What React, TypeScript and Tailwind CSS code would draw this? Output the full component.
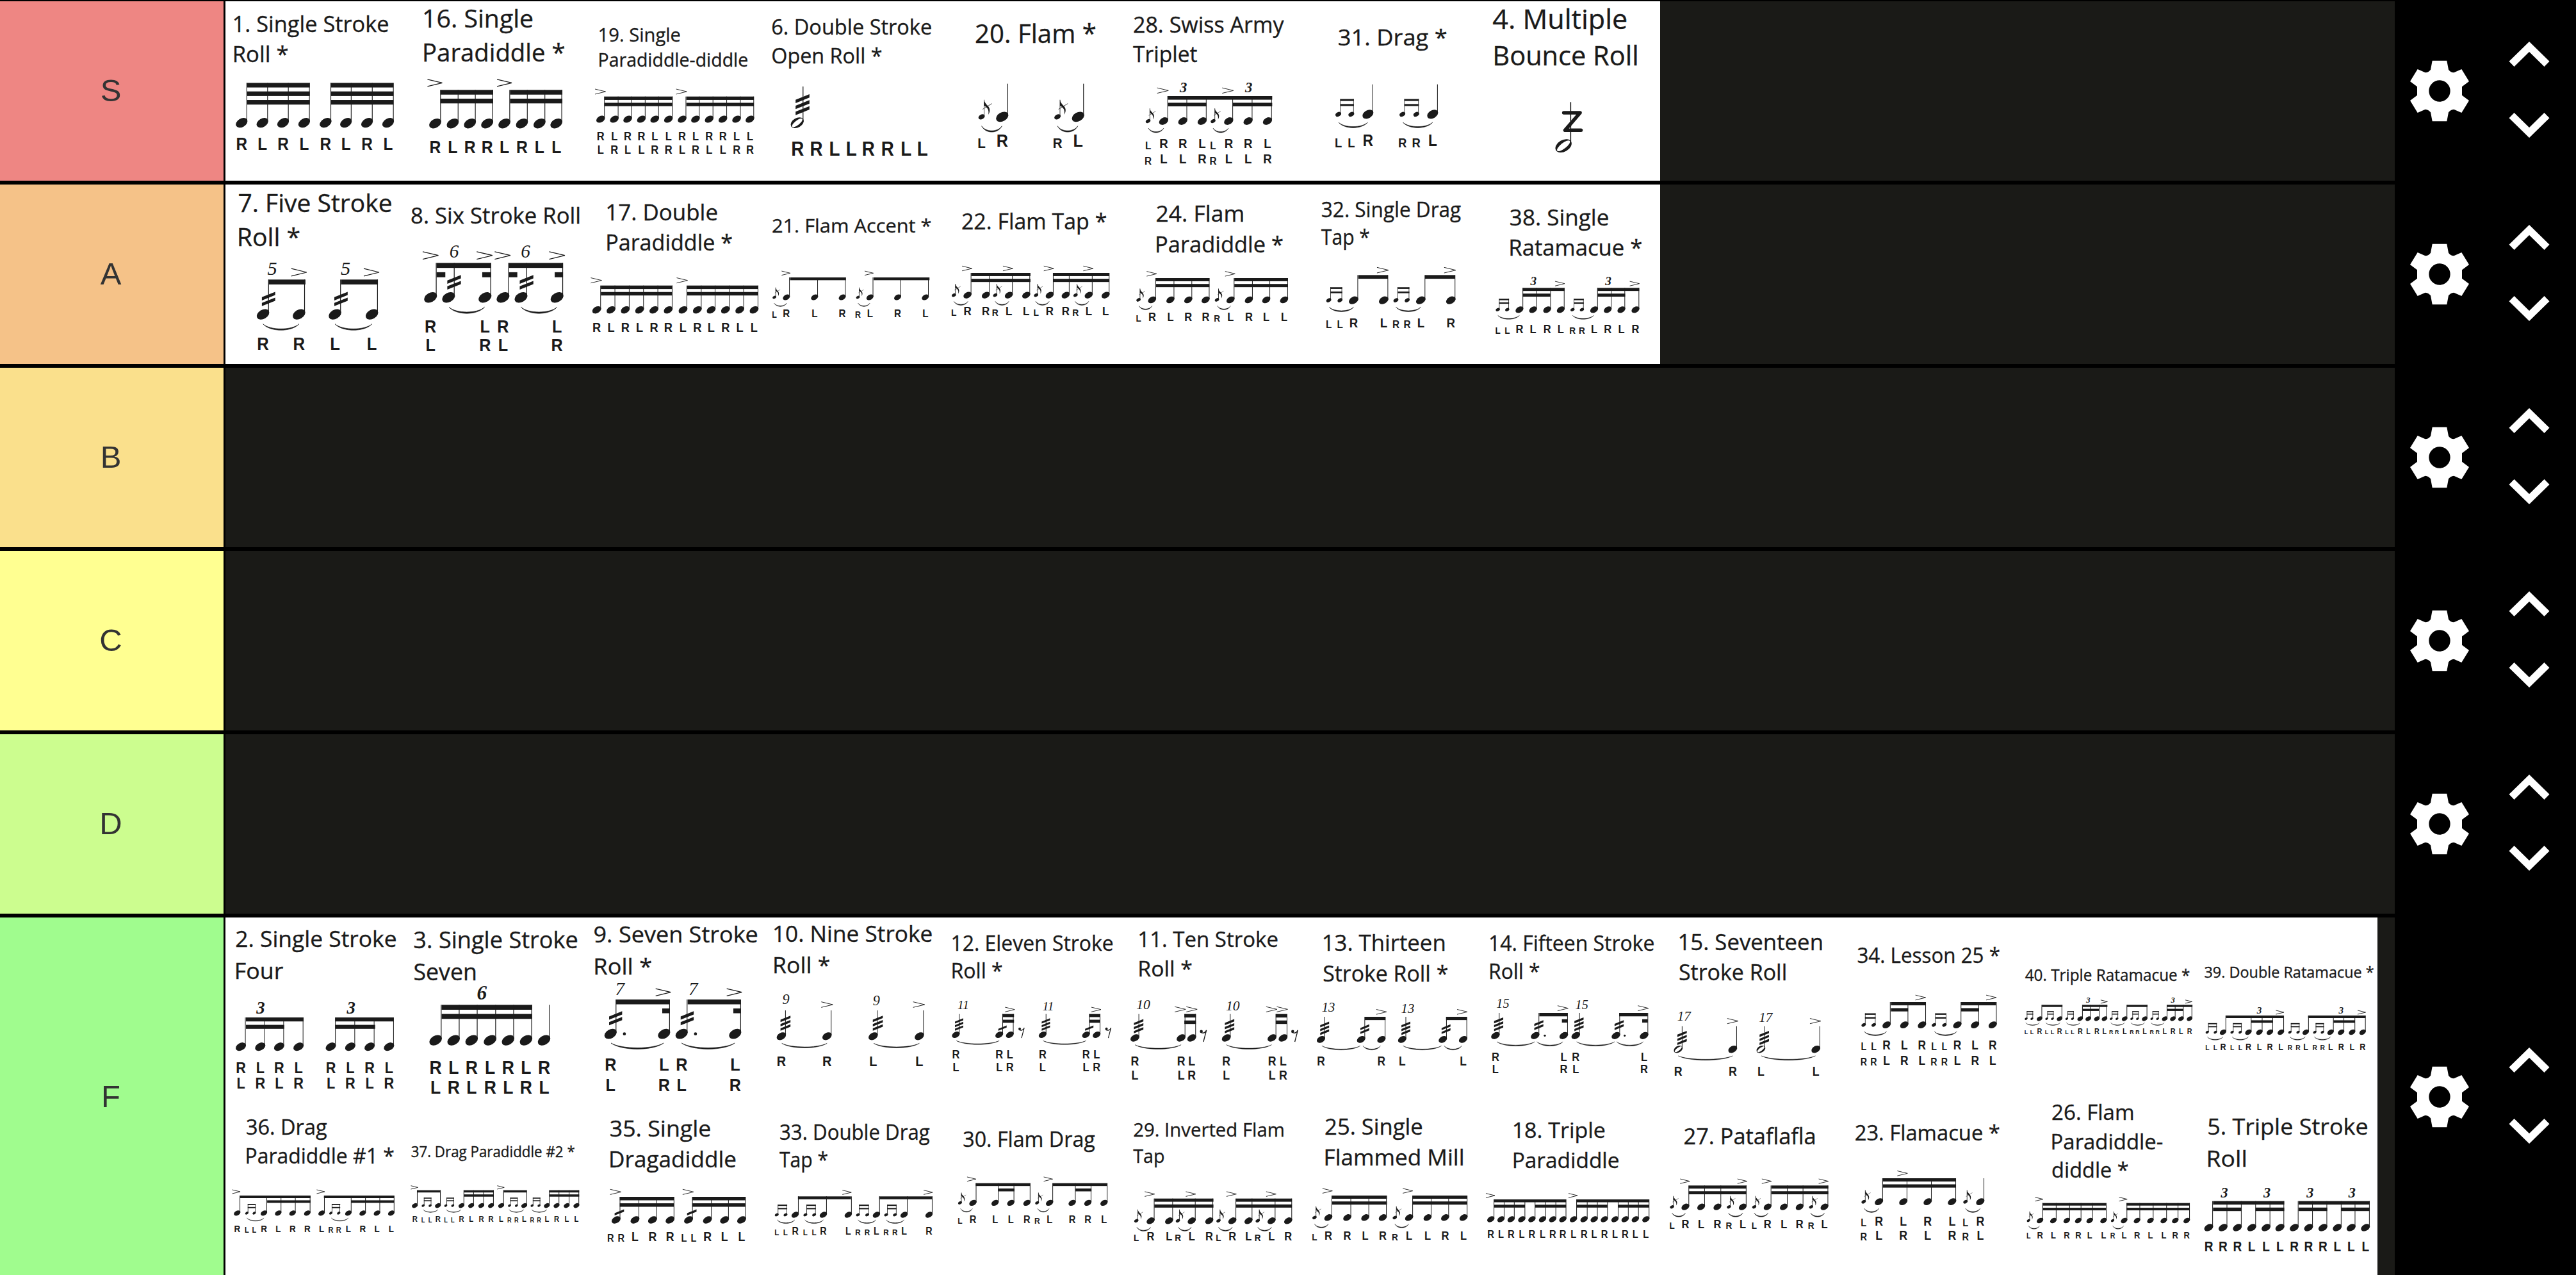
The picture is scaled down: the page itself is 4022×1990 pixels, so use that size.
import React from "react";

/* ------------------------------------------------------------------ */
/* Drum notation                                                       */
/* ------------------------------------------------------------------ */

const INK = "#1a1a1a";

/** Origin and horizontal density of the grid that a strip of cards is drawn on. */
type Strip = { k: number; x: number; y: number };

/** A note: kind plus centre. n note, h half note, g flam grace, d drag grace, x sticking only. */
type Note = ["n" | "h" | "g" | "d" | "x", number];

type Rudiment = {
  strip: Strip;
  cap: number;
  title: [string, number, number, number][];
  h: number;
  y: number;
  top: number;
  notes: string;
  beams?: [number, number, number][];
  accents?: [number, ...number[]];
  tuplets?: { text: string; cap: number; bold?: boolean; at: [number, number][] };
  slurs?: { y: number; at: [number, number][] };
  tremolos?: [number, number, number][];
  dots?: number[];
  rests?: [number, number][];
  buzz?: boolean;
  stick?: { cap: number; rows: [number, string][] };
};

const S1: Strip = { k: 1568 / 860, x: 340, y: 0 };
const S2: Strip = { k: 1568 / 720, x: 1180, y: 0 };
const S3: Strip = { k: 1568 / 740, x: 1880, y: 0 };
const A1: Strip = { k: 1568 / 1130, x: 340, y: 280 };
const A2: Strip = { k: 1568 / 1150, x: 1460, y: 280 };
const F1: Strip = { k: 1568 / 1130, x: 340, y: 1425 };
const F2: Strip = { k: 1568 / 1130, x: 1460, y: 1425 };
const F3: Strip = { k: 1568 / 1170, x: 2580, y: 1425 };
const G1: Strip = { k: 1568 / 1130, x: 340, y: 1700 };
const G2: Strip = { k: 1568 / 1130, x: 1460, y: 1700 };
const G3: Strip = { k: 1568 / 1170, x: 2580, y: 1700 };

/** The same beams stacked on n levels. */
const stack = (n: number, ...spans: [number, number][]): [number, number, number][] =>
  spans.flatMap(([a, b]) => Array.from({ length: n }, (_, i) => [a, b, i] as [number, number, number]));

const rowS: Rudiment[] = [
  {
    strip: S1, cap: 73, title: [["1. Single Stroke", 47, 484, 150], ["Roll *", 47, 198, 290]],
    h: 45, y: 575, top: 388, notes: "n68 n127 n186 n246 n307 n365 n425 n485",
    beams: stack(3, [82, 262], [321, 500]), stick: { cap: 56, rows: [[702, "RLRLRLRL"]] },
  },
  {
    strip: S1, cap: 82, title: [["16. Single", 588, 895, 129], ["Paradiddle *", 588, 985, 288]],
    h: 46, y: 578, top: 421, notes: "n619 n669 n718 n767 n816 n866 n916 n964",
    beams: stack(2, [634, 784], [832, 981]), accents: [388, 618, 816],
    stick: { cap: 57, rows: [[718, "RLRRLRLL"]] },
  },
  {
    strip: S1, cap: 62, title: [["19. Single", 1087, 1315, 194], ["Paradiddle-diddle", 1087, 1507, 311]],
    h: 33, y: 558, top: 452,
    notes: "n1090 n1129 n1167 n1206 n1244 n1283 n1322 n1360 n1399 n1438 n1477 n1515",
    beams: stack(2, [1101, 1295], [1334, 1526]), accents: [429, 1089, 1320],
    stick: { cap: 38, rows: [[656, "RLRRLLRLRRLL"], [720, "LRLLRRLRLLRR"]] },
  },
  {
    strip: S2, cap: 71, title: [["6. Double Stroke", 56, 595, 163], ["Open Roll *", 56, 426, 297]],
    h: 50, y: 575, top: 405, notes: "h141 x142 x206 x268 x325 x383 x448 x511 x567",
    tremolos: [[159, 490, 3]], stick: { cap: 64, rows: [[728, " RRLLRRLL"]] },
  },
  {
    strip: S2, cap: 86, title: [["20. Flam *", 749, 1153, 201]],
    h: 47, y: 547, top: 392, notes: "g768 n838 g1026 n1096",
    slurs: { y: 590, at: [[768, 837], [1026, 1095]] }, stick: { cap: 58, rows: [[687, "lRrL"]] },
  },
  {
    strip: S2, cap: 73, title: [["28. Swiss Army", 1286, 1791, 153], ["Triplet", 1286, 1497, 290]],
    h: 35, y: 567, top: 450, notes: "g1334 n1387 n1452 n1518 g1555 n1608 n1674 n1740",
    beams: [[1401, 1756, 0], [1401, 1533, 1], [1622, 1756, 1]], accents: [424, 1384, 1605],
    tuplets: { text: "3", cap: 45, bold: true, at: [[1454, 433], [1676, 433]] },
    slurs: { y: 600, at: [[1335, 1387], [1555, 1607]] },
    stick: { cap: 43, rows: [[694, "lRRLlRRL"], [766, "rLLRrLLR"]] },
  },
  {
    strip: S3, cap: 76, title: [["31. Drag *", 446, 800, 213]],
    h: 42, y: 535, top: 395, notes: "d444 d487 n542 d656 d702 n756",
    slurs: { y: 573, at: [[445, 541], [658, 756]] }, stick: { cap: 52, rows: [[685, "llRrrL"]] },
  },
  {
    strip: S3, cap: 88, title: [["4. Multiple", 958, 1396, 135], ["Bounce Roll", 962, 1433, 305]],
    h: 62, y: 683, top: 478, notes: "h1189", buzz: true,
  },
];

const rowA: Rudiment[] = [
  {
    strip: A1, cap: 83, title: [["7. Five Stroke", 46, 375, 153], ["Roll *", 46, 176, 312]],
    h: 48, y: 632, top: 469, notes: "n98 n176 n254 n334", beams: stack(1, [110, 190], [267, 347]),
    tremolos: [[110, 560, 2], [267, 560, 2]], accents: [435, 176, 333],
    tuplets: { text: "5", cap: 60, at: [[118, 447], [277, 447]] },
    slurs: { y: 677, at: [[98, 176], [254, 334]] }, stick: { cap: 59, rows: [[797, "RRLL"]] },
  },
  {
    strip: A1, cap: 75, title: [["8. Six Stroke Roll", 420, 784, 208]],
    h: 49, y: 553, top: 391, notes: "n461 n500 n579 n618 n657 n735",
    beams: [[474, 592, 0], [630, 748, 0], [474, 493, 1], [573, 592, 1], [630, 649, 1], [730, 748, 1]],
    tremolos: [[512, 482, 2], [669, 482, 2]], accents: [356, 461, 578, 617, 735],
    tuplets: { text: "6", cap: 58, at: [[512, 365], [667, 365]] },
    slurs: { y: 598, at: [[501, 578], [657, 735]] },
    stick: { cap: 58, rows: [[716, "R LR L"], [805, "L RL R"]] },
  },
  {
    strip: A1, cap: 73, title: [["17. Double", 844, 1081, 192], ["Paradiddle *", 844, 1113, 334]],
    h: 34, y: 611, top: 497,
    notes: "n821 n852 n883 n914 n945 n976 n1008 n1039 n1069 n1100 n1131 n1162",
    beams: stack(2, [830, 985], [1017, 1171]), accents: [473, 820, 1006],
    stick: { cap: 42, rows: [[713, "RLRLRRLRLRLL"]] },
  },
  {
    strip: A1, cap: 64, title: [["21. Flam Accent *", 1202, 1544, 248]],
    h: 27, y: 552, top: 459, notes: "g1206 n1232 n1293 n1353 g1387 n1413 n1473 n1533",
    beams: stack(1, [1240, 1361], [1421, 1542]), accents: [439, 1231, 1411],
    slurs: { y: 579, at: [[1205, 1233], [1387, 1413]] }, stick: { cap: 35, rows: [[646, "lRLRrLRL"]] },
  },
  {
    strip: A2, cap: 75, title: [["22. Flam Tap *", 58, 363, 233]],
    h: 31, y: 542, top: 438, notes: "g40 n69 n108 g128 n157 n194 g215 n244 n278 g299 n327 n363",
    beams: stack(2, [77, 203], [251, 371]), accents: [417, 68, 155, 242, 326],
    slurs: { y: 571, at: [[40, 70], [128, 157], [214, 243], [298, 327]] },
    stick: { cap: 39, rows: [[636, "lRRrLLlRRrLL"]] },
  },
  {
    strip: A2, cap: 75, title: [["24. Flam", 472, 656, 198], ["Paradiddle *", 472, 739, 343]],
    h: 31, y: 564, top: 462, notes: "g433 n462 n501 n539 n576 g600 n629 n668 n705 n743",
    beams: stack(2, [470, 584], [637, 751]), accents: [442, 461, 628],
    slurs: { y: 592, at: [[434, 462], [601, 629]] }, stick: { cap: 38, rows: [[664, "lRLRRrLRLL"]] },
  },
  {
    strip: A2, cap: 70, title: [["32. Single Drag", 824, 1117, 177], ["Tap *", 824, 923, 306]],
    h: 36, y: 566, top: 448, notes: "d838 d862 n891 n955 d981 d1005 n1034 n1098",
    beams: stack(1, [901, 964], [1043, 1107]), accents: [425, 953, 1096],
    slurs: { y: 598, at: [[839, 891], [981, 1034]] }, stick: { cap: 43, rows: [[692, "llRLrrLR"]] },
  },
  {
    strip: A2, cap: 75, title: [["38. Single", 1225, 1432, 215], ["Ratamacue *", 1225, 1503, 358]],
    h: 30, y: 610, top: 508,
    notes: "d1198 d1218 n1244 n1273 n1303 n1332 d1357 d1377 n1403 n1432 n1461 n1491",
    beams: [[1251, 1340, 0], [1410, 1499, 0], [1251, 1310, 1], [1410, 1469, 1]],
    accents: [488, 1330, 1489], tuplets: { text: "3", cap: 38, bold: true, at: [[1274, 495], [1433, 495]] },
    slurs: { y: 637, at: [[1198, 1244], [1357, 1402]] }, stick: { cap: 38, rows: [[720, "llRLRLrrLRLR"]] },
  },
];

const rowF: Rudiment[] = [
  {
    strip: F1, cap: 75, title: [["2. Single Stroke", 40, 385, 160], ["Four", 40, 139, 309]],
    h: 39, y: 626, top: 489, notes: "n50 n92 n133 n175 n245 n287 n329 n371",
    beams: [[61, 186, 0], [255, 381, 0], [61, 144, 1], [255, 341, 1]],
    tuplets: { text: "3", cap: 53, bold: true, at: [[93, 470], [289, 470]] },
    stick: { cap: 50, rows: [[750, "RLRLRLRL"], [822, "LRLRLRLR"]] },
  },
  {
    strip: F1, cap: 77, title: [["3. Single Stroke", 426, 778, 165], ["Seven", 426, 559, 315]],
    h: 48, y: 596, top: 430, notes: "n472 n511 n550 n590 n629 n668 n707", beams: stack(2, [485, 681]),
    tuplets: { text: "6", cap: 62, bold: true, at: [[572, 405]] },
    stick: { cap: 61, rows: [[754, "RLRLRLR"], [845, "LRLRLRL"]] },
  },
  {
    strip: F1, cap: 76, title: [["9. Seven Stroke", 816, 1168, 137], ["Roll *", 818, 938, 287]],
    h: 47, y: 566, top: 405, notes: "n851 n967 n1005 n1121",
    beams: [[863, 979, 0], [1018, 1133, 0], [963, 979, 1], [1117, 1133, 1]],
    tremolos: [[862, 493, 2], [1017, 493, 2]], dots: [881, 1035], accents: [371, 965, 1119],
    tuplets: { text: "7", cap: 58, at: [[871, 383], [1030, 383]] },
    slurs: { y: 609, at: [[852, 966], [1005, 1120]] },
    stick: { cap: 58, rows: [[738, "RLRL"], [833, "LRLR"]] },
  },
  {
    strip: F1, cap: 76, title: [["10. Nine Stroke", 1206, 1546, 136], ["Roll *", 1206, 1324, 281]],
    h: 36, y: 577, top: 456, notes: "n1221 n1320 n1420 n1520",
    tremolos: [[1230, 516, 3], [1430, 516, 3]], accents: [429, 1320, 1519],
    tuplets: { text: "9", cap: 44, at: [[1231, 425], [1427, 431]] },
    slurs: { y: 610, at: [[1222, 1320], [1421, 1520]] }, stick: { cap: 46, rows: [[716, "RRLL"]] },
  },
  {
    strip: F2, cap: 70, title: [["12. Eleven Stroke", 38, 384, 176], ["Roll *", 38, 144, 305]],
    h: 30, y: 570, top: 473, notes: "n45 n139 n162 n233 n327 n350",
    beams: stack(2, [146, 171], [334, 358]),
    tremolos: [[52, 522, 3], [240, 522, 3], [146, 539, 1], [334, 539, 1]], accents: [452, 162, 349],
    tuplets: { text: "11", cap: 38, at: [[61, 451], [245, 457]] },
    rests: [[187, 560], [375, 560]], slurs: { y: 598, at: [[46, 139], [234, 327]] },
    stick: { cap: 38, rows: [[681, "RRLRRL"], [740, "LLRLLR"]] },
  },
  {
    strip: F2, cap: 71, title: [["11. Ten Stroke", 443, 741, 159], ["Roll *", 443, 555, 298]],
    h: 34, y: 585, top: 473, notes: "n433 n533 n556 n631 n730 n754",
    beams: stack(2, [540, 565], [738, 762]), tremolos: [[441, 530, 3], [638, 530, 3]],
    accents: [451, 531, 556, 729, 752], tuplets: { text: "10", cap: 43, at: [[451, 449], [645, 455]] },
    rests: [[581, 574], [779, 574]], slurs: { y: 617, at: [[433, 533], [631, 729]] },
    stick: { cap: 41, rows: [[714, "RRLRRL"], [779, "LLRLLR"]] },
  },
  {
    strip: F2, cap: 75, title: [["13. Thirteen", 842, 1104, 177], ["Stroke Roll *", 842, 1109, 320]],
    h: 32, y: 592, top: 486, notes: "n836 n923 n967 n1012 n1100 n1144",
    beams: stack(1, [931, 976], [1107, 1152]),
    tremolos: [[844, 540, 3], [1020, 540, 3], [931, 544, 2], [1107, 544, 2]], accents: [463, 967, 1142],
    tuplets: { text: "13", cap: 41, at: [[852, 461], [1024, 467]] },
    slurs: { y: 622, at: [[838, 921], [927, 965], [1014, 1097], [1103, 1141]] },
    stick: { cap: 40, rows: [[714, "R RL L"]] },
  },
  {
    strip: F2, cap: 70, title: [["14. Fifteen Stroke", 1203, 1556, 177], ["Roll *", 1203, 1308, 308]],
    h: 33, y: 574, top: 468, notes: "n1214 n1300 n1362 n1388 n1475 n1536",
    beams: [[1309, 1370, 0], [1482, 1544, 0], [1358, 1370, 1], [1532, 1544, 1]],
    tremolos: [[1221, 521, 3], [1395, 521, 3], [1308, 525, 2], [1482, 525, 2]], dots: [1321, 1494],
    accents: [446, 1360, 1534], tuplets: { text: "15", cap: 40, at: [[1230, 443], [1401, 449]] },
    slurs: { y: 603, at: [[1217, 1299], [1304, 1360], [1390, 1472], [1477, 1534]] },
    stick: { cap: 38, rows: [[693, "R LR L"], [750, "L RL R"]] },
  },
  {
    strip: F3, cap: 74, title: [["15. Seventeen", 57, 355, 174], ["Stroke Roll", 57, 279, 315]],
    h: 34, y: 638, top: 530, notes: "h54 n168 h227 n342", tremolos: [[62, 585, 3], [234, 585, 3]],
    accents: [506, 168, 341], tuplets: { text: "17", cap: 42, at: [[66, 503], [237, 509]] },
    slurs: { y: 669, at: [[54, 168], [228, 341]] }, stick: { cap: 41, rows: [[763, "RRLL"]] },
  },
  {
    strip: F3, cap: 70, title: [["34. Lesson 25 *", 430, 725, 234]],
    h: 32, y: 524, top: 417, notes: "d442 d463 n490 n527 n564 d589 d611 n638 n675 n712",
    beams: [[499, 572, 0], [646, 719, 0], [499, 535, 1], [646, 683, 1]], accents: [396, 561, 709],
    slurs: { y: 555, at: [[443, 490], [590, 637]] },
    stick: { cap: 40, rows: [[640, "llRLRllRLR"], [711, "rrLRLrrLRL"]] },
  },
  {
    strip: F3, cap: 54, title: [["40. Triple Ratamacue *", 781, 1123, 318]],
    h: 21, y: 495, top: 430,
    notes:
      "d782 d794 n810 d825 d837 n852 d867 d879 n895 n912 n930 n946 d960 d972 n988 d1003 d1015 n1030 d1045 d1057 n1072 n1089 n1106 n1124",
    beams: [
      [815, 858, 0], [900, 952, 0], [993, 1036, 0], [1077, 1130, 0], [900, 935, 1], [1077, 1111, 1],
    ],
    accents: [415, 945, 1122], tuplets: { text: "3", cap: 25, bold: true, at: [[912, 419], [1089, 419]] },
    slurs: { y: 514, at: [[781, 810], [823, 853], [866, 895], [959, 988], [1001, 1030], [1043, 1071]] },
    stick: { cap: 25, rows: [[566, "llRllRllRLRLrrLrrLrrLRLR"]] },
  },
  {
    strip: F3, cap: 52, title: [["39. Double Ratamacue *", 1156, 1508, 303]],
    h: 25, y: 558, top: 480,
    notes:
      "d1161 d1178 n1194 d1213 d1230 n1247 n1270 n1292 n1315 d1334 d1351 n1367 d1386 d1402 n1419 n1441 n1464 n1486",
    beams: [[1200, 1320, 0], [1372, 1492, 0], [1253, 1298, 1], [1425, 1470, 1]],
    accents: [465, 1313, 1484], tuplets: { text: "3", cap: 30, bold: true, at: [[1270, 471], [1441, 471]] },
    slurs: { y: 580, at: [[1161, 1194], [1213, 1247], [1334, 1366], [1385, 1419]] },
    stick: { cap: 29, rows: [[641, "llRllRLRLrrLrrLRLR"]] },
  },
  {
    strip: G1, cap: 70, title: [["36. Drag", 63, 234, 214], ["Paradiddle #1 *", 63, 380, 347]],
    h: 25, y: 580, top: 498,
    notes: "n42 d63 d79 n100 n131 n162 n194 n225 d245 d262 n283 n314 n345 n376",
    beams: [[48, 201, 0], [230, 382, 0], [107, 201, 1], [289, 382, 1]], accents: [480, 40, 223],
    slurs: { y: 603, at: [[63, 100], [246, 283]] }, stick: { cap: 31, rows: [[668, "RllRLRRLrrLRLL"]] },
  },
  {
    strip: G1, cap: 49, title: [["37. Drag Paradiddle #2 *", 420, 772, 319]],
    h: 22, y: 545, top: 473,
    notes:
      "n427 d445 d460 n477 d494 d509 n528 n549 n571 n592 n614 d632 d647 n664 d681 d696 n713 n734 n756 n777",
    beams: [
      [432, 483, 0], [533, 598, 0], [619, 669, 0], [719, 783, 0], [533, 598, 1], [719, 783, 1],
    ],
    accents: [460, 426, 613], slurs: { y: 564, at: [[445, 477], [495, 527], [631, 663], [680, 713]] },
    stick: { cap: 26, rows: [[621, "RllRllRLRRLrrLrrLRLL"]] },
  },
  {
    strip: G1, cap: 76, title: [["35. Single", 851, 1066, 221], ["Dragadiddle", 851, 1121, 366]],
    h: 34, y: 612, top: 504,
    notes: "x851 x874 n863 n904 n942 n980 x1010 x1031 n1020 n1061 n1098 n1135",
    beams: stack(2, [871, 988], [1028, 1143]), tremolos: [[870, 577, 1], [1027, 577, 1]],
    accents: [481, 862, 1019], stick: { cap: 41, rows: [[710, "rr LRRll RLL"]] },
  },
  {
    strip: G1, cap: 69, title: [["33. Double Drag", 1219, 1540, 237], ["Tap *", 1219, 1320, 365]],
    h: 28, y: 588, top: 502,
    notes: "d1211 d1230 n1251 d1273 d1292 n1312 n1366 d1387 d1407 n1427 d1448 d1467 n1487 n1541",
    beams: stack(1, [1257, 1372], [1433, 1548]), accents: [483, 1363, 1539],
    slurs: { y: 612, at: [[1212, 1250], [1272, 1312], [1387, 1426], [1448, 1487]] },
    stick: { cap: 33, rows: [[681, "llRllRLrrLrrLR"]] },
  },
  {
    strip: G2, cap: 70, title: [["30. Flam Drag", 62, 344, 269]],
    h: 28, y: 532, top: 440, notes: "g54 n82 n130 n164 n199 g221 n248 n297 n331 n366",
    beams: [[88, 206, 0], [255, 373, 0], [137, 172, 1], [304, 339, 1]], accents: [421, 79, 245],
    slurs: { y: 559, at: [[55, 81], [222, 247]] }, stick: { cap: 34, rows: [[628, "lRLLRrLRRL"]] },
  },
  {
    strip: G2, cap: 64, title: [["29. Inverted Flam", 431, 755, 223], ["Tap", 431, 495, 344]],
    h: 31, y: 616, top: 512, notes: "g436 n467 n507 g526 n556 n594 g614 n644 n679 g699 n729 n765",
    beams: stack(2, [475, 603], [652, 773]), accents: [491, 465, 554, 642, 728],
    slurs: { y: 646, at: [[437, 467], [527, 555], [614, 644], [699, 729]] },
    stick: { cap: 38, rows: [[709, "lRLrLRlRLrLR"]] },
  },
  {
    strip: G2, cap: 75, title: [["25. Single", 846, 1054, 214], ["Flammed Mill", 846, 1144, 357]],
    h: 31, y: 601, top: 498, notes: "g822 n852 n893 n932 n970 g996 n1027 n1067 n1105 n1145",
    beams: stack(2, [860, 979], [1034, 1153]), accents: [476, 850, 1024],
    slurs: { y: 631, at: [[822, 852], [996, 1026]] }, stick: { cap: 38, rows: [[704, "lRRLRrLLRL"]] },
  },
  {
    strip: G2, cap: 72, title: [["18. Triple", 1254, 1450, 228], ["Paradiddle", 1254, 1480, 369]],
    h: 28, y: 609, top: 516,
    notes:
      "n1204 n1226 n1248 n1271 n1293 n1316 n1338 n1360 n1383 n1406 n1428 n1450 n1473 n1495 n1517 n1540",
    beams: [
      [1211, 1367, 0], [1390, 1547, 0], [1211, 1278, 1], [1300, 1367, 1], [1390, 1457, 1], [1480, 1547, 1],
    ],
    accents: [498, 1203, 1382], stick: { cap: 34, rows: [[695, "RLRLRLRRLRLRLRLL"]] },
  },
  {
    strip: G3, cap: 73, title: [["27. Pataflafla", 67, 340, 258]],
    h: 30, y: 551, top: 451, notes: "g41 n69 n102 n136 g160 n189 g213 n241 n275 n308 g332 n360",
    beams: stack(2, [76, 197], [249, 368]), accents: [431, 68, 188, 239, 358],
    slurs: { y: 580, at: [[41, 69], [159, 189], [213, 242], [331, 360]] },
    stick: { cap: 38, rows: [[652, "lRLRrLlRLRrL"]] },
  },
  {
    strip: G3, cap: 70, title: [["23. Flamacue *", 425, 725, 239]],
    h: 32, y: 527, top: 417, notes: "g442 n474 n525 n576 n627 g655 n686",
    beams: stack(2, [482, 635]), accents: [394, 523], slurs: { y: 558, at: [[443, 474], [655, 686]] },
    stick: { cap: 41, rows: [[638, "lRLRLlR"], [705, "rLRLRrL"]] },
  },
  {
    strip: G3, cap: 71,
    title: [["26. Flam", 837, 1006, 145], ["Paradiddle-", 837, 1066, 281], ["diddle *", 837, 994, 414]],
    h: 25, y: 615, top: 533,
    notes: "g787 n811 n839 n867 n891 n915 n944 g963 n987 n1014 n1042 n1070 n1094 n1118",
    beams: stack(2, [816, 949], [992, 1124]), accents: [515, 809, 985],
    slurs: { y: 640, at: [[787, 810], [963, 986]] }, stick: { cap: 30, rows: [[698, "lRLRRLLrLRLLRR"]] },
  },
  {
    strip: G3, cap: 76, title: [["5. Triple Stroke", 1163, 1495, 213], ["Roll", 1163, 1242, 362]],
    h: 34, y: 648, top: 524,
    notes: "n1164 n1194 n1224 n1254 n1284 n1313 n1343 n1373 n1403 n1433 n1462 n1492",
    beams: [
      [1173, 1322, 0], [1352, 1501, 0], [1173, 1233, 1], [1262, 1322, 1], [1352, 1412, 1], [1441, 1501, 1],
    ],
    tuplets: { text: "3", cap: 44, bold: true, at: [[1197, 508], [1286, 508], [1376, 508], [1464, 508]] },
    stick: { cap: 44, rows: [[758, "RRRLLLRRRLLL"]] },
  },
];

/* ------------------------------------------------------------------ */
/* Rudiment card                                                       */
/* ------------------------------------------------------------------ */

/** Left side bearing of a title's first glyph, in em. */
const bearing = (text: string) => (/^[PRDFB1]/.test(text) ? 0.09 : 0.045);

function Card({ r, left, top }: { r: Rudiment; left: number; top: number }) {
  const X = (v: number) => r.strip.x + v / r.strip.k - left;
  const Y = (v: number) => r.strip.y + v / 3 - top;
  const h = r.h / 3;
  const y = Y(r.y);
  const stemTop = Y(r.top);
  const notes: Note[] = r.notes.split(" ").map((s) => [s[0] as Note[0], X(Number(s.slice(1)))]);
  const stem = Math.max(1, h * 0.075);
  const gh = h * 0.55;
  const graceTop = y - h * 1.7;
  const em = r.cap / 3 / 0.714;

  return (
    <svg
      className="block h-[280px] w-[280px] shrink-0 overflow-visible bg-white"
      viewBox="0 0 280 280"
      fill={INK}
    >
      {r.title.map(([text, x1, x2, base]) => (
        <text
          key={text}
          x={X(x1) - em * bearing(text)}
          y={Y(base)}
          fontSize={em}
          textLength={X(x2) - X(x1) + em * (bearing(text) + 0.06)}
          lengthAdjust="spacingAndGlyphs"
          stroke={INK}
          strokeWidth=".35"
          className="font-['Open_Sans',sans-serif]"
        >
          {text}
        </text>
      ))}

      {notes.map(([kind, x], i) => {
        if (kind === "x") return null;
        if (kind === "n" || kind === "h") {
          return (
            <g key={i}>
              <rect x={x + h * 0.58 - stem} y={stemTop} width={stem} height={y - h * 0.1 - stemTop} />
              <g transform={`translate(${x} ${y}) rotate(-30)`}>
                <ellipse rx={h * 0.66} ry={h * 0.44} />
                {kind === "h" && (
                  <ellipse rx={h * 0.6} ry={h * 0.21} fill="#fff" transform="rotate(-8)" />
                )}
              </g>
            </g>
          );
        }
        const sx = x + gh * 0.52;
        const next = notes[i + 1];
        return (
          <g key={i}>
            <ellipse
              rx={gh * 0.62}
              ry={gh * 0.42}
              transform={`translate(${x} ${y}) rotate(-30)`}
            />
            <rect x={sx - 1} y={graceTop} width={Math.max(0.8, h * 0.05)} height={y - graceTop} />
            {kind === "g" && (
              <g transform={`translate(${sx - 0.6} ${graceTop}) scale(${h})`}>
                <path d="M0 0C.05 .45 .55 .6 .56 1 .57 1.2 .5 1.35 .42 1.48 .5 1.1 .4 .8 0 .6Z" />
                <path d="M-.15 .95L.78 .38" stroke={INK} strokeWidth=".05" />
              </g>
            )}
            {kind === "d" &&
              next?.[0] === "d" &&
              [0, 0.56].map((dy) => (
                <rect
                  key={dy}
                  x={sx - 1}
                  y={graceTop + dy * h}
                  width={next[1] - x + 1}
                  height={h * 0.22}
                />
              ))}
          </g>
        );
      })}

      {r.beams?.map(([a, b, level], i) => (
        <rect key={i} x={X(a)} y={stemTop + level * h * 0.89} width={X(b) - X(a)} height={h * 0.48} />
      ))}

      {r.accents?.slice(1).map((a, i) => (
        <path
          key={i}
          d={`M${X(a) - h * 0.75} ${Y(r.accents![0]) - h * 0.36}l${h * 1.5} ${h * 0.36}l${-h * 1.5} ${h * 0.36}`}
          fill="none"
          stroke={INK}
          strokeWidth={Math.max(0.9, h * 0.08)}
          strokeLinejoin="bevel"
        />
      ))}

      {r.tuplets?.at.map(([x, base], i) => (
        <text
          key={i}
          x={X(x)}
          y={Y(base)}
          textAnchor="middle"
          fontSize={r.tuplets!.cap / 3 / 0.66}
          className={
            r.tuplets!.bold
              ? "font-['Liberation_Serif',serif] font-bold italic"
              : "font-['Liberation_Serif',serif] italic"
          }
        >
          {r.tuplets!.text}
        </text>
      ))}

      {r.slurs?.at.map(([a, b], i) => {
        const w = X(b) - X(a);
        const d = h * 0.8;
        const t = h * 0.17;
        return (
          <path
            key={i}
            d={`M${X(a)} ${Y(r.slurs!.y)}c${w * 0.2} ${d} ${w * 0.8} ${d} ${w} 0c${-w * 0.2} ${d - t} ${-w * 0.8} ${d - t} ${-w} 0z`}
            stroke={INK}
            strokeWidth={h * 0.04}
          />
        );
      })}

      {r.tremolos?.map(([x, cy, n], i) => (
        <g key={i}>
          {Array.from({ length: n }, (_, j) => {
            const my = Y(cy) + (j - (n - 1) / 2) * h * 0.56;
            const w = h * 0.65;
            return (
              <path
                key={j}
                d={`M${X(x) - w} ${my + h * 0.1}l${w * 2} ${-h * 0.52}v${h * 0.32}l${-w * 2} ${h * 0.52}z`}
              />
            );
          })}
        </g>
      ))}

      {r.dots?.map((x) => (
        <circle key={x} cx={X(x)} cy={y} r={h * 0.15} />
      ))}

      {r.rests?.map(([x, cy]) => (
        <g key={x} transform={`translate(${X(x)} ${Y(cy)}) scale(${h})`}>
          <circle cx="-.27" cy="-.58" r=".2" />
          <path
            d="M-.4 -.5C-.1 -.25 .3 -.35 .44 -.75L.02 .85"
            fill="none"
            stroke={INK}
            strokeWidth=".12"
          />
        </g>
      ))}

      {r.buzz && (
        <path
          d={`M${X(1190)} ${Y(528)}H${X(1244)}L${X(1194)} ${Y(610)}H${X(1247)}`}
          fill="none"
          stroke={INK}
          strokeWidth="5.5"
          strokeLinejoin="round"
          strokeLinecap="round"
        />
      )}

      {r.stick?.rows.map(([base, text]) =>
        [...text].map((c, i) => {
          if (c === " ") return null;
          const small = c === c.toLowerCase();
          const cap = (r.stick!.cap / 3) * (small ? 0.82 : 1);
          return (
            <text
              key={`${base}-${i}`}
              transform={`translate(${notes[i][1]} ${Y(base) + (small ? cap * 0.1 : 0)}) scale(.9 1)`}
              textAnchor="middle"
              fontSize={cap / 0.69}
              className="font-['Liberation_Sans',sans-serif] font-bold"
            >
              {c.toUpperCase()}
            </text>
          );
        }),
      )}
    </svg>
  );
}

/* ------------------------------------------------------------------ */
/* Controls                                                            */
/* ------------------------------------------------------------------ */

function Gear() {
  return (
    <svg className="h-[96px] w-[96px]" viewBox="-144 -144 288 288" fill="#fff">
      <path
        fillRule="evenodd"
        d="M-34-142H34L42-100Q50-88 67-86L103-102 138-45 105-20V20L138 45 103 102 67 86Q50 88 42 100L34 142H-34L-42 100Q-50 88-67 86L-103 102-138 45-105 20V-20L-138-45-103-102-67-86Q-50-88-42-100ZM0-50A50 50 0 1 0 0 50A50 50 0 1 0 0-50Z"
      />
    </svg>
  );
}

function Chevron({ down = false }: { down?: boolean }) {
  return (
    <svg className="h-[39px] w-[64px]" viewBox="0 0 64 39" fill="none" stroke="#fff" strokeWidth="11.5">
      <path d={down ? "M4.5 4.2L32 31 59.5 4.2" : "M4.5 34.8L32 8 59.5 34.8"} />
    </svg>
  );
}

/* ------------------------------------------------------------------ */
/* Tier list                                                           */
/* ------------------------------------------------------------------ */

type Tier = { label: string; color: string; top: number; cards: Rudiment[] };

const tiers: Tier[] = [
  { label: "S", color: "bg-[#ee8683]", top: 2, cards: rowS },
  { label: "A", color: "bg-[#f5c288]", top: 288, cards: rowA },
  { label: "B", color: "bg-[#fae08c]", top: 574, cards: [] },
  { label: "C", color: "bg-[#ffff91]", top: 860, cards: [] },
  { label: "D", color: "bg-[#ccfd8f]", top: 1146, cards: [] },
  { label: "F", color: "bg-[#a0fc8e]", top: 1432, cards: rowF },
];

const PER_LINE = 12;

function TierRow({ tier }: { tier: Tier }) {
  return (
    <section className="flex min-h-[280px] shrink-0">
      <div
        className={`flex w-[349px] shrink-0 items-center justify-center pr-[3px] font-['Liberation_Sans',sans-serif] text-[49px] text-[#333333] ${tier.color}`}
      >
        {tier.label}
      </div>
      <div className="ml-[3px] flex w-[3387px] shrink-0 flex-wrap content-start bg-[#1a1a17]">
        {tier.cards.map((r, i) => (
          <Card
            key={r.title[0][0]}
            r={r}
            left={352 + (i % PER_LINE) * 280}
            top={tier.top + Math.floor(i / PER_LINE) * 280}
          />
        ))}
      </div>
      <div className="flex w-[140px] shrink-0 items-center justify-center">
        <Gear />
      </div>
      <div className="flex w-[140px] shrink-0 flex-col items-center justify-center gap-[72px] pb-[4px]">
        <Chevron />
        <Chevron down />
      </div>
    </section>
  );
}

export default function App() {
  return (
    <main className="flex h-[1990px] w-[4022px] flex-col gap-[6px] overflow-hidden bg-black pt-[2px]">
      {tiers.map((t) => (
        <TierRow key={t.label} tier={t} />
      ))}
    </main>
  );
}
